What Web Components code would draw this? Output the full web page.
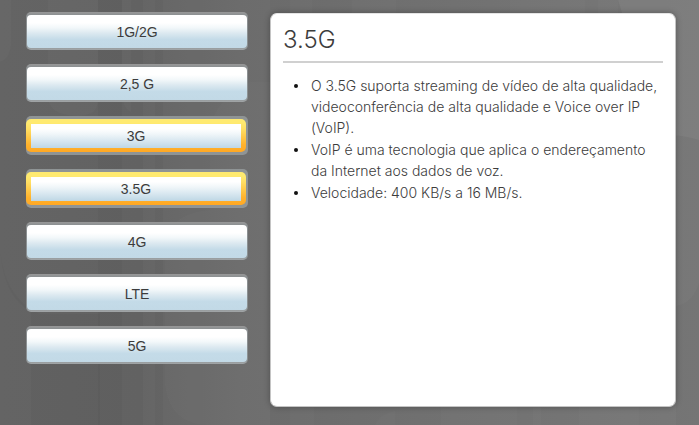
<!DOCTYPE html>
<html lang="pt">
<head>
<meta charset="utf-8">
<title>Gerações de rede móvel</title>
<style>
  body { margin: 0; font-family: "Liberation Sans", Arial, sans-serif; color: #3c3c3c; }
</style>
</head>
<body>
<tech-viewer>
  <tech-nav slot="nav">
    <tech-button>1G/2G</tech-button>
    <tech-button>2,5 G</tech-button>
    <tech-button visited>3G</tech-button>
    <tech-button visited current>3.5G</tech-button>
    <tech-button>4G</tech-button>
    <tech-button>LTE</tech-button>
    <tech-button>5G</tech-button>
  </tech-nav>
  <info-panel>
    <span slot="title">3.5G</span>
    <info-item>O 3.5G suporta streaming de vídeo de alta qualidade, videoconferência de alta qualidade e Voice over IP (VoIP).</info-item>
    <info-item>VoIP é uma tecnologia que aplica o endereçamento da Internet aos dados de voz.</info-item>
    <info-item>Velocidade: 400 KB/s a 16 MB/s.</info-item>
  </info-panel>
</tech-viewer>

<script>
function define(name, html, setup) {
  const template = document.createElement('template');
  template.innerHTML = html;
  customElements.define(name, class extends HTMLElement {
    constructor() {
      super();
      this.attachShadow({ mode: 'open' }).append(template.content.cloneNode(true));
    }
    connectedCallback() { if (setup) setup(this); }
  });
}

define('gear-backdrop', `
  <style>
    :host { position: absolute; inset: 0; z-index: -1; }
    svg { display: block; width: 100%; height: 100%; }
  </style>
  <svg viewBox="0 0 699 425" preserveAspectRatio="none" aria-hidden="true">
    <defs>
      <linearGradient id="base" x1="0" x2="1">
        <stop offset="0" stop-color="#646464"/><stop offset=".2" stop-color="#626262"/>
        <stop offset=".34" stop-color="#6a6a6a"/><stop offset=".6" stop-color="#707070"/>
        <stop offset="1" stop-color="#787878"/>
      </linearGradient>
    </defs>
    <rect width="699" height="425" fill="url(#base)"/>
    <g fill="#fff" fill-opacity=".018">
      <path d="M48 0h50v100q0 16-20 16-26 0-30-16z"/>
      <path d="M0 0h11v46Q9 60 0 62z"/>
      <path d="M163 0h107v425H163z"/>
      <path d="M210 130Q214 100 250 82h20v343H210z"/>
      <path d="M122 0h9v112q-8-4-9-16zM143 0h12v425h-12z"/>
      <path d="M165 240Q175 212 210 210v215q-40 0-45-40z"/>
      <path d="M290 0h22v14h-22zM352 0h44v14h-44zM510 0h75v14h-75zM598 0h20v14h-20z"/>
      <path d="M290 406h24v19h-24zM375 425q6-12 20-14v14zM441 406h76v19h-76zM533 406h8v19h-8zM579 406h60v19h-60z"/>
    </g>
    <g fill="#000" fill-opacity=".025">
      <path d="M0 240q0 55 40 74h60v111H31V312Q0 295 0 240z"/>
      <path d="M98 0h24v425H98z"/>
      <path d="M676 306q18-4 23-24v143h-23z"/>
    </g>
    <path d="M618 0h81v140q-15-5-39-6z" fill="#fff" fill-opacity=".05"/>
  </svg>`);

define('tech-viewer', `
  <style>
    :host {
      position: relative; z-index: 0; box-sizing: border-box; min-height: 100vh;
      display: grid; grid-template-columns: minmax(0, 222fr) minmax(0, 406fr); gap: 22px;
      padding: 12px 23px 18px 26px;
    }
  </style>
  <gear-backdrop></gear-backdrop>
  <slot name="nav"></slot>
  <slot></slot>`);

define('tech-nav', `
  <style>
    :host { display: block; }
    nav { box-sizing: border-box; height: 100%; padding-bottom: 43px;
      display: flex; flex-direction: column; justify-content: space-between; gap: 8px; }
  </style>
  <nav aria-label="Tecnologias"><slot></slot></nav>`);

define('tech-button', `
  <style>
    :host { display: block; }
    button {
      display: block; box-sizing: border-box; width: 100%; margin: 0;
      padding: 3px 1px 2px; border: 0; border-radius: 5px;
      background: linear-gradient(#989898, #8c9092 3px, #8c9294 90%, #a2a6a8);
      font: 14px/31px "Liberation Sans", Arial, sans-serif; color: #3c3c3c; cursor: pointer;
    }
    span {
      display: block; border-radius: 4px; padding: 2px 0 0; text-align: center;
      background: linear-gradient(#fff 24%, #f3f8fa 38%, #dce9f0 55%, #c4dbe8 74%, #c2d9e6);
    }
    :host([visited]) button { padding: 3px 2px 3px 0; background: #8f9495; }
    :host([visited]) span {
      border: solid transparent; border-width: 5px 5px 4px; border-radius: 5px;
      padding: 1px 0 0; line-height: 23px;
      background:
        linear-gradient(#fff 20%, #f0f6f9 42%, #bed7e5) padding-box,
        linear-gradient(#ffea70 12%, #ffdf64 30%, #ffb22c 78%, #ffa824) border-box;
    }
    button:focus-visible { outline: 2px solid #fff; }
  </style>
  <button type="button"><span><slot></slot></span></button>`,
  host => {
    if (host.hasAttribute('current'))
      host.shadowRoot.querySelector('button').setAttribute('aria-current', 'true');
  });

define('info-panel', `
  <style>
    :host {
      display: block; box-sizing: border-box; margin-top: 1px; padding: 11px 12px;
      border: 1px solid #c4c4c4; border-top-color: #e4e4e4; border-radius: 7px;
      background: #fff; box-shadow: 0 0 6px rgba(0, 0, 0, .3);
    }
    h1 {
      margin: 0 0 12px; padding-bottom: 6px; border-bottom: 2px solid #d0d0d0;
      font: 300 24px/30px Inter, "Liberation Sans", sans-serif; color: #3c3c3c;
    }
    div { display: grid; gap: 1px; padding-left: 11px; }
  </style>
  <h1><slot name="title"></slot></h1>
  <div role="list"><slot></slot></div>`);

define('info-item', `
  <style>
    :host {
      display: grid; grid-template-columns: 4px 1fr; column-gap: 13px;
      font: 300 14px/21px Inter, "Liberation Sans", sans-serif; color: #3c3c3c;
    }
    i { margin-top: 9px; height: 4px; border-radius: 50%; background: #111; }
  </style>
  <i></i><span><slot></slot></span>`,
  host => host.setAttribute('role', 'listitem'));
</script>
</body>
</html>
